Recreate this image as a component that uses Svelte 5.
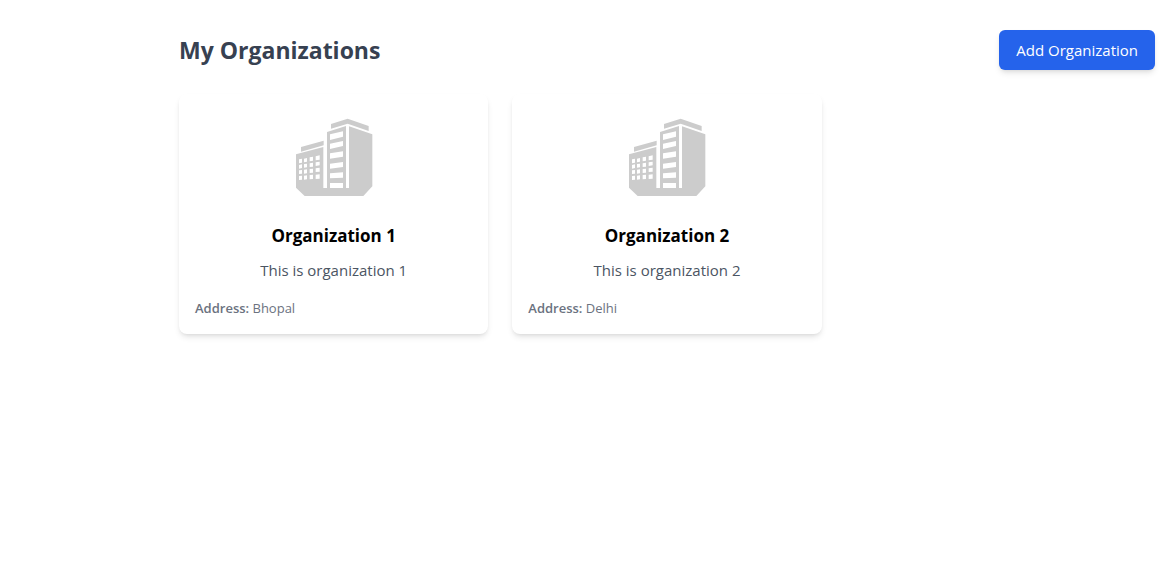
<script lang="ts">
	type Organization = {
		id: number;
		name: string;
		description: string;
		address: string;
	};

	let organizations = $state<Organization[]>([
		{ id: 1, name: 'Organization 1', description: 'This is organization 1', address: 'Bhopal' },
		{ id: 2, name: 'Organization 2', description: 'This is organization 2', address: 'Delhi' }
	]);
</script>

<main class="page">
	<header class="page-header">
		<h1>My Organizations</h1>
		<button type="button" class="add-button">Add Organization</button>
	</header>

	<div class="organization-grid">
		{#each organizations as organization (organization.id)}
			<article class="card">
				<svg class="logo" viewBox="3 0 288 288" aria-hidden="true">
					<!-- roofs -->
					<path d="M48 111 116 92V106L48 125ZM138 42 188 26 251 48V63L188 41 138 56Z" />
					<!-- left block, tower front and base -->
					<path
						fill-rule="evenodd"
						d="M33 133 115 111V234H126V66L183 48V234H192V49L262 73V229L235 258H59L33 233Z
						M42 148 51 146V158L42 160ZM57 146 66 144V155L57 157ZM74 142 84 140V152L74 154ZM92 139 104 136V149L92 151Z
						M42 165 51 163V174L42 176ZM57 162 66 161V172L57 173ZM74 160 84 158V170L74 171ZM92 157 104 155V166L92 168Z
						M42 181 51 180V191L42 192ZM57 179 66 178V190L57 191ZM74 177 84 176V188L74 189ZM92 175 104 173V185L92 186Z
						M42 198 51 197V209L42 210ZM57 197 66 196V208L57 209ZM74 195 84 194V207L74 208ZM92 194 104 193V206L92 207Z
						M135 73 174 64V80L135 90ZM135 101 174 93V108L135 117ZM135 130 174 124V140L135 146Z
						M135 161 174 156V171L135 176ZM135 190 174 187V203L135 205ZM135 219H174V234H135Z"
					/>
				</svg>
				<h2>{organization.name}</h2>
				<p class="description">{organization.description}</p>
				<p class="address"><strong>Address:</strong> {organization.address}</p>
			</article>
		{/each}
	</div>
</main>

<style>
	:global(body) {
		margin: 0;
		background: #fff;
		font-family: 'Segoe UI', 'Open Sans', 'Noto Sans', sans-serif;
	}

	.page {
		padding: 30px 11px 30px 179px;
	}

	.page-header {
		display: flex;
		align-items: center;
		justify-content: space-between;
		margin-bottom: 24px;
	}

	h1,
	h2,
	p {
		margin: 0;
	}

	h1 {
		font-size: 23px;
		line-height: 32px;
		font-weight: 700;
		color: #374151;
	}

	.add-button {
		padding: 8px 17px;
		border: 0;
		border-radius: 6px;
		background: #2563eb;
		color: #fff;
		font: inherit;
		font-size: 15px;
		line-height: 24px;
		box-shadow:
			0 4px 6px -1px rgba(0, 0, 0, 0.1),
			0 2px 4px -2px rgba(0, 0, 0, 0.1);
		cursor: pointer;
	}

	.organization-grid {
		display: grid;
		grid-template-columns: repeat(3, minmax(0, 1fr));
		gap: 24px;
	}

	.card {
		display: flex;
		flex-direction: column;
		align-items: center;
		padding: 16px;
		border-radius: 8px;
		background: #fff;
		box-shadow:
			0 4px 6px -1px rgba(0, 0, 0, 0.1),
			0 2px 4px -2px rgba(0, 0, 0, 0.1);
	}

	.logo {
		width: 96px;
		height: 96px;
		margin-bottom: 16px;
		fill: #ccc;
	}

	h2 {
		margin-bottom: 8px;
		font-size: 17px;
		line-height: 28px;
		font-weight: 700;
		color: #000;
	}

	.description {
		margin-bottom: 16px;
		font-size: 15px;
		line-height: 24px;
		color: #4b5563;
	}

	.address {
		align-self: flex-start;
		font-size: 13px;
		line-height: 20px;
		color: #6b7280;
	}

	.address strong {
		font-weight: 600;
	}
</style>
